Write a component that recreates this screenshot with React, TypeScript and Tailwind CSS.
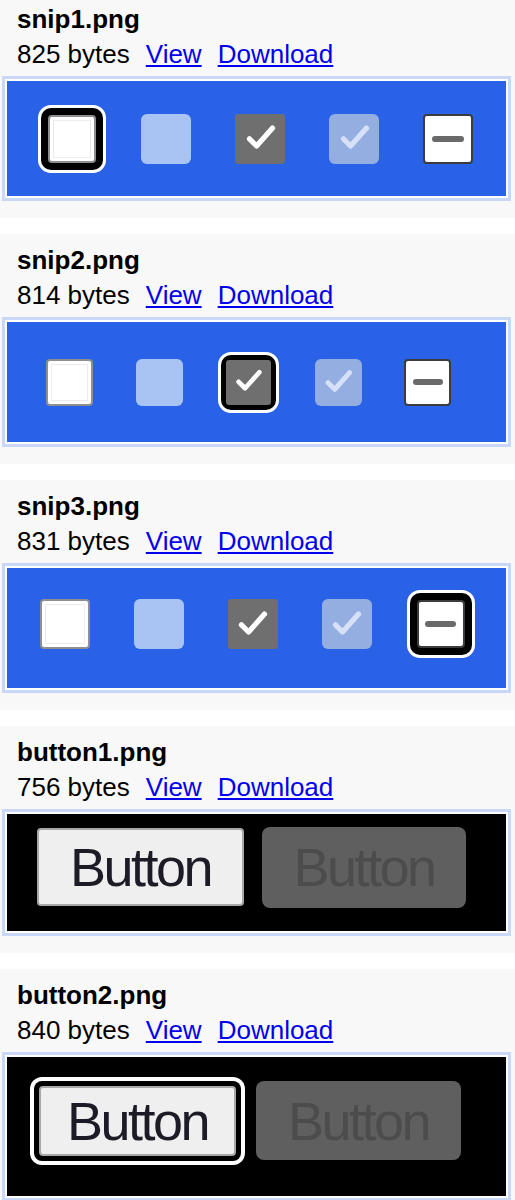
import React from "react"

type BoxKind = "unchecked" | "disabled" | "checked" | "disabledChecked" | "indeterminate"

type CheckItem = {
    kind: BoxKind,
    focused?: boolean,
}

const CheckMark = ({ color }: { color: string }) => (
    <svg viewBox="0 0 24 24" className="w-[78%] h-[78%]" fill="none">
        <path d="M5.2 12.2 L9.6 16.6 L19.4 5.6" stroke={color} strokeWidth="3.2" strokeLinecap="round" strokeLinejoin="round" />
    </svg>
)

const Checkbox = ({ kind, size }: { kind: BoxKind, size: number }) => {
    const dim = { width: size, height: size }
    if (kind === "disabled") {
        return <div style={dim} className="rounded-[6px] bg-[#a9c4f2]" />
    }
    if (kind === "checked") {
        return (
            <div style={dim} className="rounded-[3px] bg-[#6f6f6f] flex items-center justify-center">
                <CheckMark color="#ffffff" />
            </div>
        )
    }
    if (kind === "disabledChecked") {
        return (
            <div style={dim} className="rounded-[6px] bg-[#95aee2] flex items-center justify-center">
                <CheckMark color="#d6e1f7" />
            </div>
        )
    }
    if (kind === "indeterminate") {
        return (
            <div style={dim} className="rounded-[4px] bg-white border-[2px] border-[#3c3c3c] flex items-center justify-center">
                <div className="w-[70%] h-[6px] rounded-full bg-[#6a6a6a]" />
            </div>
        )
    }
    return (
        <div style={dim} className="rounded-[4px] bg-white border-[2px] border-[#8f8f8f] p-[3px]">
            <div className="w-full h-full border border-[#ececec]" />
        </div>
    )
}

const FocusRing = ({ children, ring }: { children: React.ReactNode, ring: number }) => (
    <div className="rounded-[13px] bg-white p-[3px]">
        <div className="rounded-[10px] bg-black" style={{ padding: ring }}>
            {children}
        </div>
    </div>
)

type CheckRowProps = {
    items: CheckItem[],
    size: number,
    slot: number,
    padLeft: number,
    padBottom?: number,
    ring: number,
}

const CheckRow = ( props: CheckRowProps ) => (
    <div className="flex items-center h-full" style={{ paddingLeft: props.padLeft, paddingBottom: props.padBottom ?? 0 }}>
        {props.items.map((it, i) => (
            <div key={i} className="flex items-center justify-center shrink-0" style={{ width: props.slot }}>
                {it.focused
                    ? <FocusRing ring={props.ring}><Checkbox kind={it.kind} size={props.size - 2} /></FocusRing>
                    : <Checkbox kind={it.kind} size={props.size} />}
            </div>
        ))}
    </div>
)

const ButtonLabel = ({ dim }: { dim?: boolean }) => (
    <span className={`text-[54px] leading-none tracking-[-2.5px] font-['Liberation_Sans',Arial,sans-serif]
    ${ dim ? 'text-[#4c4c4c]' : 'text-[#1d1b26]' }`}>
        Button
    </span>
)

const LightButton = ({ w, h }: { w: number, h: number }) => (
    <div style={{ width: w, height: h }} className="rounded-[4px] bg-[#efefef] border-[2px] border-[#a8a8a8] flex items-center justify-center">
        <ButtonLabel />
    </div>
)

const DimButton = ({ w, h }: { w: number, h: number }) => (
    <div style={{ width: w, height: h }} className="rounded-[8px] bg-[#5f5f5f] flex items-center justify-center shrink-0">
        <ButtonLabel dim />
    </div>
)

type CardProps = {
    name: string,
    bytes: number,
    boxHeight: number,
    dark?: boolean,
    children: React.ReactNode,
}

const FileCard = ( props: CardProps ) => (
    <div className="bg-[#f8f8f8] pt-[11px] pb-[17px]">
        <div className="pl-[17px] h-[30px] leading-[30px] text-[26px] font-bold text-black">{props.name}</div>
        <div className="pl-[17px] h-[40px] leading-[40px] text-[26px] text-black whitespace-nowrap">
            <span>{props.bytes} bytes</span>
            <a href="#" className="ml-[16px] text-[#0000ee] underline">View</a>
            <a href="#" className="ml-[16px] text-[#0000ee] underline">Download</a>
        </div>
        <div
            style={{ height: props.boxHeight }}
            className="mt-[2px] ml-[2px] w-[509px] border-[3px] border-[#c8d8f6] bg-white p-[2px]"
        >
            <div className={`h-full w-full overflow-hidden ${ props.dark ? 'bg-black' : 'bg-[#2962e6]' }`}>
                {props.children}
            </div>
        </div>
    </div>
)

const App = () => {
    return (
        <div className="bg-white min-h-[1200px] overflow-hidden font-['Liberation_Sans',Arial,sans-serif]">
            <div className="-mt-[7px] flex flex-col gap-[16px]">
                <FileCard name="snip1.png" bytes={825} boxHeight={125}>
                    <CheckRow
                        size={50} slot={94} padLeft={18} ring={7}
                        items={[
                            { kind: "unchecked", focused: true },
                            { kind: "disabled" },
                            { kind: "checked" },
                            { kind: "disabledChecked" },
                            { kind: "indeterminate" },
                        ]}
                    />
                </FileCard>

                <FileCard name="snip2.png" bytes={814} boxHeight={130}>
                    <CheckRow
                        size={47} slot={89.5} padLeft={18} ring={5}
                        items={[
                            { kind: "unchecked" },
                            { kind: "disabled" },
                            { kind: "checked", focused: true },
                            { kind: "disabledChecked" },
                            { kind: "indeterminate" },
                        ]}
                    />
                </FileCard>

                <FileCard name="snip3.png" bytes={831} boxHeight={130}>
                    <CheckRow
                        size={50} slot={94} padLeft={10.5} padBottom={8} ring={7}
                        items={[
                            { kind: "unchecked" },
                            { kind: "disabled" },
                            { kind: "checked" },
                            { kind: "disabledChecked" },
                            { kind: "indeterminate", focused: true },
                        ]}
                    />
                </FileCard>

                <FileCard name="button1.png" bytes={756} boxHeight={127} dark>
                    <div className="flex items-center h-full pl-[30px] pb-[11px] gap-[18px]">
                        <LightButton w={207} h={78} />
                        <DimButton w={204} h={81} />
                    </div>
                </FileCard>

                <FileCard name="button2.png" bytes={840} boxHeight={149} dark>
                    <div className="flex items-center h-full pl-[23px] pb-[12px] gap-[11px]">
                        <div className="rounded-[12px] bg-white p-[4px]">
                            <div className="rounded-[8px] bg-black p-[5px]">
                                <LightButton w={197} h={70} />
                            </div>
                        </div>
                        <DimButton w={205} h={79} />
                    </div>
                </FileCard>
            </div>
        </div>
    )
}

export default App
